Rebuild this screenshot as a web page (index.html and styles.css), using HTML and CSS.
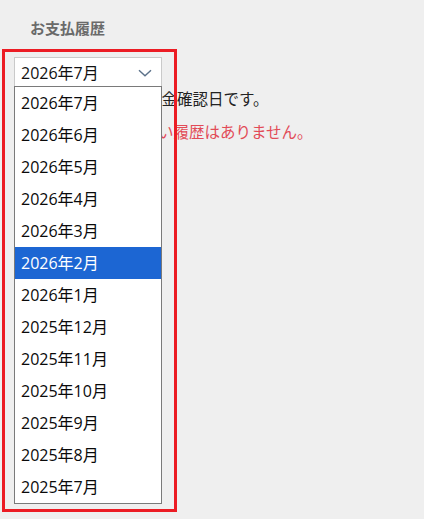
FILE: index.html
```html
<!DOCTYPE html>
<html lang="ja">
<head>
    <meta charset="UTF-8">
    <meta name="viewport" content="width=device-width, initial-scale=1.0">
    <title>お支払履歴</title>
    <link rel="stylesheet" href="styles.css">
</head>
<body>
    <div class="history">
        <h2 class="history-title">お支払履歴</h2>

        <!-- Month filter with its open list -->
        <div class="month-filter">
            <div class="month-select">
                <span>2026年7月</span>
                <svg class="chevron" width="14" height="8" viewBox="0 0 14 8">
                    <path d="M1 1.2 L7 6.8 L13 1.2" fill="none" stroke="#5b7189" stroke-width="1.4"/>
                </svg>
            </div>
            <ul class="month-list">
                <li>2026年7月</li>
                <li>2026年6月</li>
                <li>2026年5月</li>
                <li>2026年4月</li>
                <li>2026年3月</li>
                <li class="selected">2026年2月</li>
                <li>2026年1月</li>
                <li>2025年12月</li>
                <li>2025年11月</li>
                <li>2025年10月</li>
                <li>2025年9月</li>
                <li>2025年8月</li>
                <li>2025年7月</li>
            </ul>
        </div>

        <p class="history-note">※表示中の日付は入金確認日です。</p>
        <p class="history-empty">該当期間のお支払い履歴はありません。</p>

        <!-- Red frame round the filter -->
        <div class="focus-frame"></div>
    </div>
</body>
</html>
```

FILE: styles.css
```css
* {
    box-sizing: border-box;
    margin: 0;
    padding: 0;
}
body {
    font-family: 'Open Sans', 'Noto Sans CJK JP', sans-serif;
    background-color: #efefef;
    color: #222;
    width: 424px;
    height: 519px;
    overflow: hidden;
}
.history {
    position: relative;
    height: 100%;
    padding: 17px 0 0 14px;
}
.history-title {
    font-family: 'Noto Sans CJK JP', sans-serif;
    font-size: 15px;
    font-weight: 700;
    line-height: 22px;
    color: #6a6a6a;
    margin: 0 0 18px 16px;
}

/* Month filter */
.month-filter {
    position: relative;
    width: 148px;
}
.month-select {
    display: flex;
    align-items: center;
    justify-content: space-between;
    height: 30px;
    padding: 0 9px 0 6px;
    background-color: white;
    border: 1px solid #cacaca;
    font-size: 16px;
    color: #111;
}
.chevron {
    display: block;
    margin-top: 1px;
}
.month-list {
    position: absolute;
    top: 29px;
    left: 0;
    width: 148px;
    list-style: none;
    background-color: white;
    border: 1px solid #7a7a7a;
    z-index: 10;
}
.month-list li {
    height: 32px;
    line-height: 32px;
    padding-left: 6px;
    font-size: 16px;
    color: #0a0a0a;
}
.month-list li.selected {
    background-color: #1c66d3;
    color: white;
}

/* Texts under the filter */
.history-note,
.history-empty {
    font-family: 'Noto Sans CJK JP', sans-serif;
    font-size: 15.5px;
    line-height: 22px;
}
.history-note {
    margin-left: 8px;
    color: #222;
}
.history-empty {
    margin-top: 11px;
    margin-left: 20px;
    color: #e24b57;
}

.focus-frame {
    position: absolute;
    top: 49px;
    left: 2px;
    width: 175px;
    height: 463px;
    border: 3px solid #ec1c24;
    z-index: 20;
    pointer-events: none;
}
```
